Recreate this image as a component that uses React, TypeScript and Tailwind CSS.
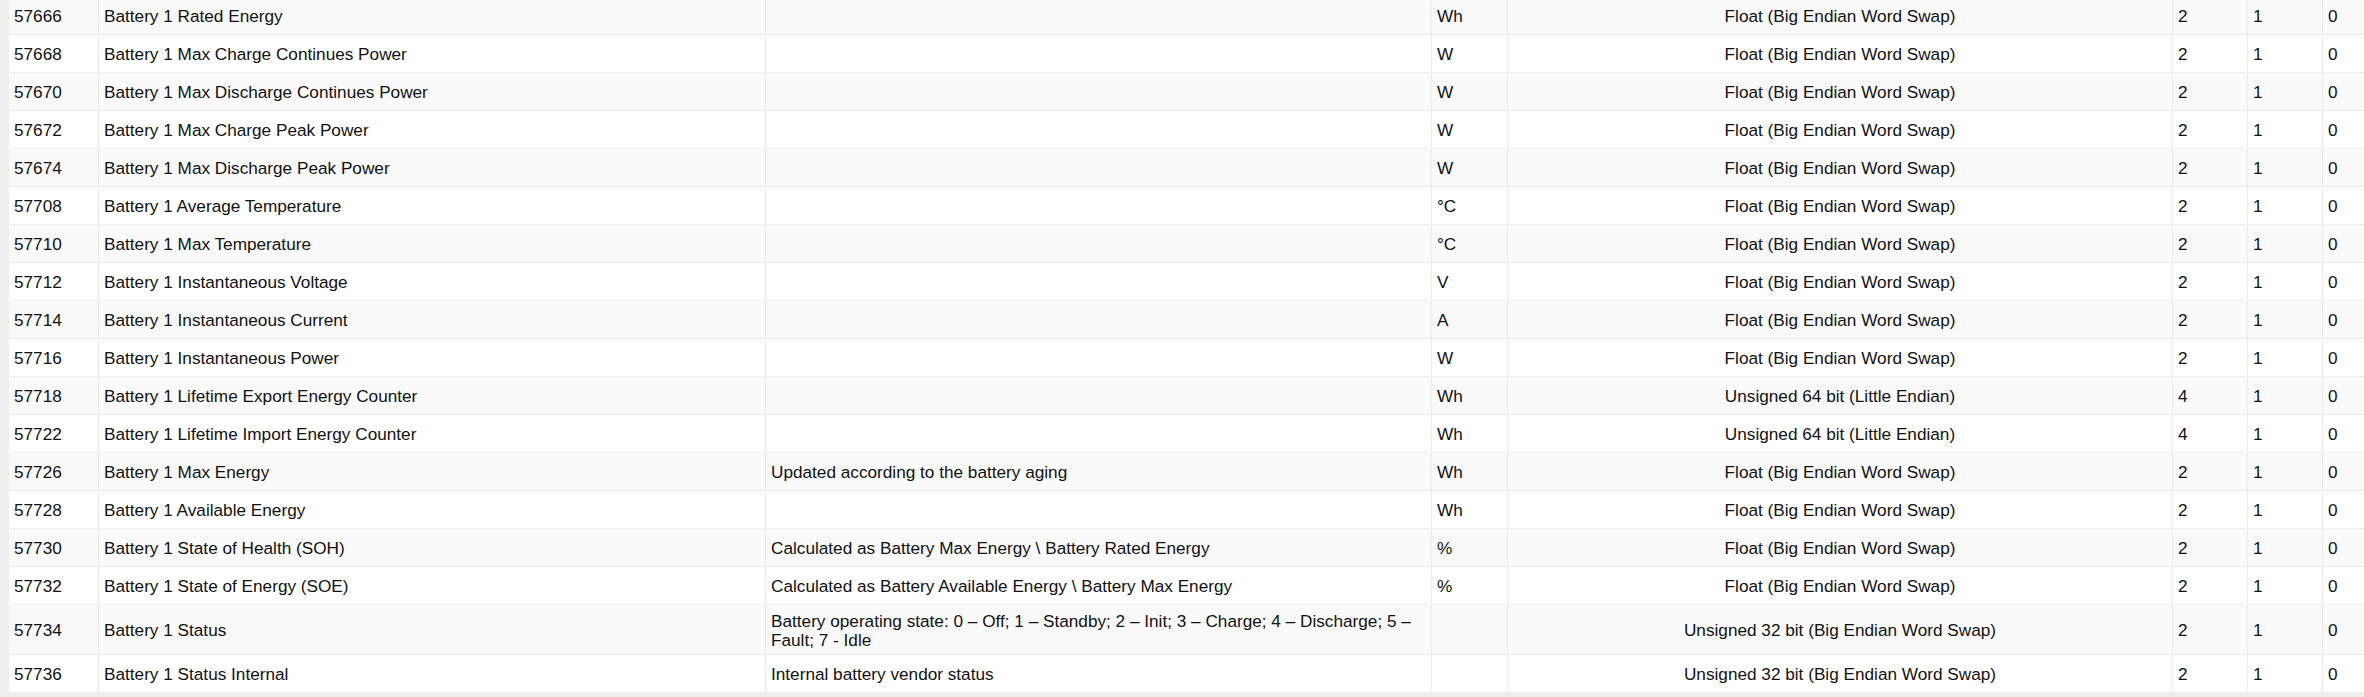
type Row = [string, string, string, string, string, string, string, string];

const FLOAT = "Float (Big Endian Word Swap)";
const U64 = "Unsigned 64 bit (Little Endian)";
const U32 = "Unsigned 32 bit (Big Endian Word Swap)";

const rows: Row[] = [
  ["57666", "Battery 1 Rated Energy", "", "Wh", FLOAT, "2", "1", "0"],
  ["57668", "Battery 1 Max Charge Continues Power", "", "W", FLOAT, "2", "1", "0"],
  ["57670", "Battery 1 Max Discharge Continues Power", "", "W", FLOAT, "2", "1", "0"],
  ["57672", "Battery 1 Max Charge Peak Power", "", "W", FLOAT, "2", "1", "0"],
  ["57674", "Battery 1 Max Discharge Peak Power", "", "W", FLOAT, "2", "1", "0"],
  ["57708", "Battery 1 Average Temperature", "", "°C", FLOAT, "2", "1", "0"],
  ["57710", "Battery 1 Max Temperature", "", "°C", FLOAT, "2", "1", "0"],
  ["57712", "Battery 1 Instantaneous Voltage", "", "V", FLOAT, "2", "1", "0"],
  ["57714", "Battery 1 Instantaneous Current", "", "A", FLOAT, "2", "1", "0"],
  ["57716", "Battery 1 Instantaneous Power", "", "W", FLOAT, "2", "1", "0"],
  ["57718", "Battery 1 Lifetime Export Energy Counter", "", "Wh", U64, "4", "1", "0"],
  ["57722", "Battery 1 Lifetime Import Energy Counter", "", "Wh", U64, "4", "1", "0"],
  ["57726", "Battery 1 Max Energy", "Updated according to the battery aging", "Wh", FLOAT, "2", "1", "0"],
  ["57728", "Battery 1 Available Energy", "", "Wh", FLOAT, "2", "1", "0"],
  ["57730", "Battery 1 State of Health (SOH)", "Calculated as Battery Max Energy \\ Battery Rated Energy", "%", FLOAT, "2", "1", "0"],
  ["57732", "Battery 1 State of Energy (SOE)", "Calculated as Battery Available Energy \\ Battery Max Energy", "%", FLOAT, "2", "1", "0"],
  [
    "57734",
    "Battery 1 Status",
    "Battery operating state: 0 – Off; 1 – Standby; 2 – Init; 3 – Charge; 4 – Discharge; 5 – Fault; 7 - Idle",
    "",
    U32,
    "2",
    "1",
    "0",
  ],
  ["57736", "Battery 1 Status Internal", "Internal battery vendor status", "", U32, "2", "1", "0"],
];

const widths = [
  "w-[90px]",
  "w-[667px]",
  "w-[666px]",
  "w-[76px]",
  "w-[665px]",
  "w-[75px]",
  "w-[75px]",
  "flex-1",
];

export default function App() {
  return (
    <div className="bg-[#eeeeee] pl-[9px] pb-[4px] overflow-hidden font-['Liberation_Sans',Arial,sans-serif] text-[17.2px] leading-[19px] text-[#111111]">
      {/* register table, scrolled a few px down */}
      <div className="-mt-[3px] bg-white">
        {rows.map((row, i) => (
          <div
            key={row[0]}
            className={`flex min-h-[38px] border-b border-[#ebebeb] ${i % 2 === 0 ? "bg-[#fafafa]" : "bg-white"}`}
          >
            {row.map((cell, j) => (
              <div
                key={j}
                className={`${widths[j]} shrink-0 flex items-center px-[5px] pt-[6.5px] pb-[4.5px] ${
                  j < 7 ? "border-r border-[#ebebeb]" : ""
                } ${j === 4 ? "justify-center text-center" : ""}`}
              >
                {cell}
              </div>
            ))}
          </div>
        ))}
      </div>
    </div>
  );
}
